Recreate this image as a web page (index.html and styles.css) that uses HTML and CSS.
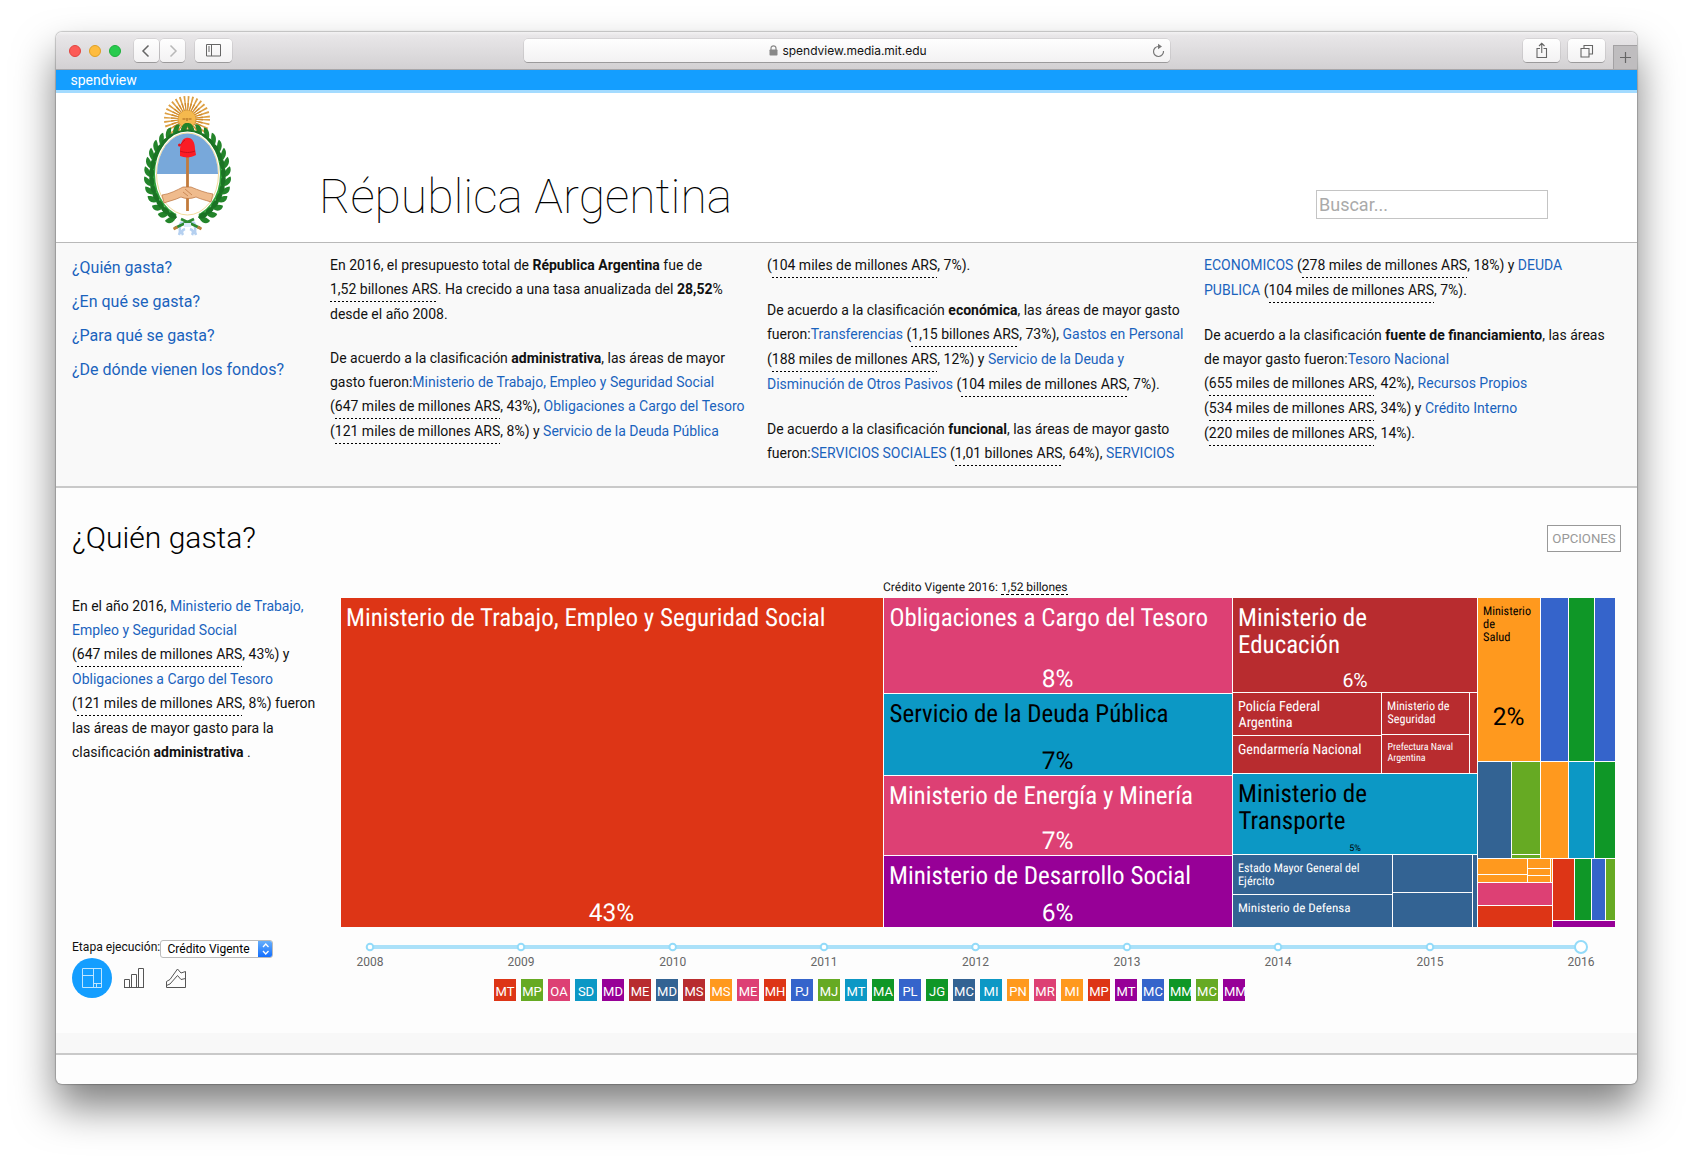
FILE: index.html
```
<!DOCTYPE html>
<html lang="es">
<head>
<meta charset="utf-8">
<title>spendview</title>
<link rel="stylesheet" href="styles.css">
</head>
<body>
<div class="window">
  <div class="toolbar">
    <div class="lights"><i class="light red"></i><i class="light amber"></i><i class="light green"></i></div>
    <div class="btn nav-btn"><svg width="10" height="14" viewBox="0 0 10 14"><path d="M7.500 1.500 2 7l5.500 5.500" fill="none" stroke="#666" stroke-width="1.500"/></svg></div>
    <div class="btn nav-btn fwd"><svg width="10" height="14" viewBox="0 0 10 14"><path d="M2.500 1.500 8 7l-5.500 5.500" fill="none" stroke="#b8b8b8" stroke-width="1.500"/></svg></div>
    <div class="btn side-btn"><svg width="16" height="13" viewBox="0 0 16 13"><path d="M.5.5h14v11.500H.5zM5.500.5v11.500M2 3h2M2 5h2M2 7h2" fill="none" stroke="#666"/></svg></div>
    <div class="btn url">
      <svg class="lock" width="9" height="11" viewBox="0 0 9 11"><path d="M2 5V3.300a2.500 2.500 0 0 1 5 0V5" fill="none" stroke="#888" stroke-width="1.200"/><rect x=".5" y="4.500" width="8" height="6" rx=".8" fill="#888"/></svg>
      <span class="address">spendview.media.mit.edu</span>
      <svg class="reload" width="13" height="15" viewBox="0 0 13 15"><path d="M6.500 3.500A5 5 0 1 0 11.500 8" fill="none" stroke="#777" stroke-width="1.200"/><path d="M6 .8 10 3.600 6 6.200z" fill="#777"/></svg>
    </div>
    <div class="btn share-btn"><svg width="12" height="17" viewBox="0 0 12 17"><path d="M4 6.500H1v9h9.500v-9h-3M5.750 11V1.500M3 4l2.750-2.750L8.500 4" fill="none" stroke="#666" stroke-width="1.100"/></svg></div>
    <div class="btn tabs-btn"><svg width="14" height="14" viewBox="0 0 14 14"><path d="M1 4.500h8v8.500H1zM4 4.500V1.500h8.500V10H9" fill="none" stroke="#666" stroke-width="1.100"/></svg></div>
    <div class="plus"><svg width="11" height="11" viewBox="0 0 11 11"><path d="M5.500 0v11M0 5.500h11" stroke="#666" stroke-width="1.200"/></svg></div>
  </div>

  <div class="brand"><span>spendview</span></div>

  <header class="head">
    <svg class="arms" width="120" height="147" viewBox="0 5 120 147">
      <defs>
        <g id="sprig">
          <path d="M-37.500 1C-45-1-46-6-44-9c4 2 7 6 6.500 10z" fill="#23842a"/>
          <path d="M-37.500 1C-31 0-30-5-32-8.500c-4 1.500-6.500 5.500-5.500 9.500z" fill="#33a13a"/>
          <path d="M-37 2c-3.500-4-3.500-8-.5-11.500C-34-6-34-2-37 2z" fill="#1b7324"/>
        </g>
        <g id="branch">
          <use href="#sprig" transform="rotate(-70)"/><use href="#sprig" transform="rotate(-58)"/><use href="#sprig" transform="rotate(-46)"/>
          <use href="#sprig" transform="rotate(-34)"/><use href="#sprig" transform="rotate(-23)"/><use href="#sprig" transform="rotate(-12)"/>
          <use href="#sprig" transform="rotate(-1)"/><use href="#sprig" transform="rotate(10)"/><use href="#sprig" transform="rotate(21)"/>
          <use href="#sprig" transform="rotate(32)"/><use href="#sprig" transform="rotate(44)"/><use href="#sprig" transform="rotate(56)"/>
          <use href="#sprig" transform="rotate(68)"/><use href="#sprig" transform="rotate(80)"/>
        </g>
      </defs>
      <circle cx="57" cy="31" r="15.500" fill="none" stroke="#dd9f42" stroke-width="15" stroke-dasharray="1.300 1.745"/>
      <circle cx="57" cy="31" r="12" fill="none" stroke="#d18b2c" stroke-width="8" stroke-dasharray="1.200 1.156"/>
      <circle cx="57" cy="31" r="9" fill="#f5b94e" stroke="#cf8c2c" stroke-width=".6"/>
      <path d="M52.500 31h3M58.500 31h3M55 35.500h4M57 30v3" stroke="#a8671d" stroke-width="1.100"/>
      <g transform="translate(57.500 88) scale(.96 1.170)">
        <path d="M-12 36A38 38 0 0 1-16-34.500M12 36A38 38 0 0 0 16-34.500" fill="none" stroke="#2b8c32" stroke-width="1.500"/>
        <use href="#branch"/><use href="#branch" transform="scale(-1 1)"/>
      </g>
      <path d="M52 134c-5 4 0 7-3 13M63 134c5 4 0 7 3 13M51 136c4-3 9-3 13 0M55 141c-3 1-4 3-2 6M60 141c3 1 4 3 2 6" fill="none" stroke="#b5d0f0" stroke-width="2.600"/>
      <path d="M45 140l19-9M70 140l-19-9" stroke="#2d8a31" stroke-width="2.600"/>
      <path d="M43.500 141l4-2M71.500 141l-4-2" stroke="#b9813c" stroke-width="3"/>
      <path d="M54 135h7v4h-7z" fill="#dceafa"/>
      <ellipse cx="57.500" cy="86" rx="31.500" ry="41.500" fill="#fff" stroke="#fff" stroke-width="2"/>
      <ellipse cx="57.500" cy="86" rx="31" ry="41" fill="#fff" stroke="#f2dc9b"/>
      <path d="M27 86a30.500 40.500 0 0 1 61 0z" fill="#78a8da"/>
      <path d="M57.500 66v57" stroke="#c27b3b" stroke-width="2.800"/>
      <path d="M32 107c8-1 15-5 21-8l8 0c7 3 15 6 22 7l-2 8c-6-2-11-3-15-5-5 2-11 2-15 0-6 3-12 4-17 6z" fill="#efbb8d" stroke="#b9713d" stroke-width=".7"/>
      <path d="M55 101l7 6M53 104l5 4" stroke="#b9713d" stroke-width=".7"/>
      <path d="M50 68V61c1-6 2-10 6-11 6-1 9 4 9 11l1 6c-5 3-11 3-16 1z" fill="#fb1c25"/>
      <path d="M50 63c5 2 10 2 15 0M55 52c-3 2-4 5-6 6" stroke="#c8101b" fill="none"/>
      <circle cx="49.500" cy="57" r="1.500" fill="#e5131f"/>
    </svg>
    <h1>Républica Argentina</h1>
    <input class="search" placeholder="Buscar...">
  </header>

  <section class="intro">
    <nav class="links">
      <a>¿Quién gasta?</a><a>¿En qué se gasta?</a><a>¿Para qué se gasta?</a><a>¿De dónde vienen los fondos?</a>
    </nav>
    <div class="cols">
      <div class="col">
        <p>En 2016, el presupuesto total de <b>Républica Argentina</b> fue de<br><u>1,52 billones ARS</u>. Ha crecido a una tasa anualizada del <b>28,52</b>%<br>desde el año 2008.</p>
        <p>De acuerdo a la clasificación <b>administrativa</b>, las áreas de mayor<br>gasto fueron:<a>Ministerio de Trabajo, Empleo y Seguridad Social</a><br>(<u>647 miles de millones ARS</u>, 43%), <a>Obligaciones a Cargo del Tesoro</a><br>(<u>121 miles de millones ARS</u>, 8%) y <a>Servicio de la Deuda Pública</a></p>
      </div>
      <div class="col">
        <p>(<u>104 miles de millones ARS</u>, 7%).</p>
        <p>De acuerdo a la clasificación <b>económica</b>, las áreas de mayor gasto<br>fueron:<a>Transferencias</a> (<u>1,15 billones ARS</u>, 73%), <a>Gastos en Personal</a><br>(<u>188 miles de millones ARS</u>, 12%) y <a>Servicio de la Deuda y<br>Disminución de Otros Pasivos</a> (<u>104 miles de millones ARS</u>, 7%).</p>
        <p>De acuerdo a la clasificación <b>funcional</b>, las áreas de mayor gasto<br>fueron:<a>SERVICIOS SOCIALES</a> (<u>1,01 billones ARS</u>, 64%), <a>SERVICIOS</a></p>
      </div>
      <div class="col">
        <p><a>ECONOMICOS</a> (<u>278 miles de millones ARS</u>, 18%) y <a>DEUDA<br>PUBLICA</a> (<u>104 miles de millones ARS</u>, 7%).</p>
        <p>De acuerdo a la clasificación <b>fuente de financiamiento</b>, las áreas<br>de mayor gasto fueron:<a>Tesoro Nacional</a><br>(<u>655 miles de millones ARS</u>, 42%), <a>Recursos Propios</a><br>(<u>534 miles de millones ARS</u>, 34%) y <a>Crédito Interno</a><br>(<u>220 miles de millones ARS</u>, 14%).</p>
      </div>
    </div>
  </section>

  <section class="spend">
    <div class="spend-head"><h2>¿Quién gasta?</h2><button class="options">OPCIONES</button></div>
    <div class="spend-body">
      <aside class="side">
        <p>En el año 2016, <a>Ministerio de Trabajo,<br>Empleo y Seguridad Social</a><br>(<u>647 miles de millones ARS</u>, 43%) y<br><a>Obligaciones a Cargo del Tesoro</a><br>(<u>121 miles de millones ARS</u>, 8%) fueron<br>las áreas de mayor gasto para la<br>clasificación <b>administrativa</b> .</p>
        <div class="controls">
          <div class="stage"><label>Etapa ejecución:</label><span class="select"><span>Crédito Vigente</span><i><svg width="15" height="18" viewBox="0 0 15 18"><path d="M5 7l2.750-3L10.500 7M5 11l2.750 3 2.750-3" fill="none" stroke="#fff" stroke-width="1.300"/></svg></i></span></div>
          <div class="modes">
            <span class="mode on"><svg width="20" height="20" viewBox="0 0 20 20"><path d="M.5.5h19v19H.5zM11.500.5v19M.5 7.500h11M11.500 15.500h8M14.500 15.500v4" fill="none" stroke="#bfe6ff"/></svg></span>
            <span class="mode"><svg width="20" height="20" viewBox="0 0 20 20"><path d="M.5 11.500h5v8h-5zM7.500 6.500h5v13h-5zM14.500.5h5v19h-5zM0 19.500h20" fill="none" stroke="#555"/></svg></span>
            <span class="mode"><svg width="20" height="20" viewBox="0 0 20 20"><path d="M.5 19.500V13.500L4 11.500 11.500 1l3.500 4 4.500-1.500v16zM.5 17.500 4 16l7.500-8.500 3.500 4 4.500-1" fill="none" stroke="#555"/></svg></span>
          </div>
        </div>
      </aside>
      <div class="chart">
        <svg class="treemap" width="1274" height="353" viewBox="341 575 1274 353">
          <g class="total"><text x="883" y="591" textLength="115">Crédito Vigente 2016:</text><text x="1001" y="591" textLength="66.500">1,52 billones</text><path d="M1001 594.500h67" stroke="#000" stroke-dasharray="3 2"/></g>
          <g class="c-red"><rect x="341" y="598" width="542" height="329"/><rect x="1478" y="906" width="74" height="21"/><rect x="1553" y="859" width="21" height="61"/></g>
          <g class="c-pink"><rect x="884" y="598" width="348" height="95"/><rect x="884" y="776" width="348" height="79"/><rect x="1478" y="883" width="74" height="22"/></g>
          <g class="c-teal"><rect x="884" y="694" width="348" height="81"/><rect x="1233" y="774" width="244" height="80"/><rect x="1569" y="762" width="25" height="96"/></g>
          <g class="c-purple"><rect x="884" y="856" width="348" height="71"/><rect x="1553" y="921" width="62" height="6"/></g>
          <g class="c-brick"><rect x="1233" y="598" width="244" height="94"/><rect x="1233" y="693" width="148" height="42"/><rect x="1233" y="736" width="148" height="37"/><rect x="1382" y="693" width="87" height="41"/><rect x="1382" y="735" width="87" height="38"/><rect x="1470" y="693" width="7" height="80"/></g>
          <g class="c-steel"><rect x="1233" y="855" width="159" height="39"/><rect x="1233" y="895" width="159" height="32"/><rect x="1393" y="855" width="79" height="37"/><rect x="1393" y="893" width="79" height="34"/><rect x="1473" y="855" width="4" height="72"/><rect x="1478" y="762" width="33" height="96"/></g>
          <g class="c-orange"><rect x="1478" y="598" width="62" height="163"/><rect x="1541" y="762" width="27" height="96"/><rect x="1478" y="859" width="49" height="15"/><rect x="1478" y="875" width="49" height="7"/><rect x="1528" y="859" width="22" height="9"/><rect x="1528" y="869" width="22" height="6"/><rect x="1528" y="876" width="22" height="6"/><rect x="1551" y="859" width="1" height="23"/></g>
          <g class="c-blue"><rect x="1541" y="598" width="27" height="163"/><rect x="1595" y="598" width="20" height="163"/><rect x="1592" y="859" width="13" height="61"/></g>
          <g class="c-green"><rect x="1569" y="598" width="25" height="163"/><rect x="1595" y="762" width="20" height="96"/><rect x="1575" y="859" width="16" height="61"/></g>
          <g class="c-lime"><rect x="1512" y="762" width="28" height="92"/><rect x="1512" y="855" width="28" height="3"/><rect x="1606" y="859" width="9" height="61"/></g>
          <g class="name big">
            <text x="346" y="626" textLength="479.500" lengthAdjust="spacingAndGlyphs">Ministerio de Trabajo, Empleo y Seguridad Social</text>
            <text x="889.500" y="626" textLength="318.500" lengthAdjust="spacingAndGlyphs">Obligaciones a Cargo del Tesoro</text>
            <text class="ink" x="889.500" y="722" textLength="279" lengthAdjust="spacingAndGlyphs">Servicio de la Deuda Pública</text>
            <text x="889" y="804" textLength="304" lengthAdjust="spacingAndGlyphs">Ministerio de Energía y Minería</text>
            <text x="889" y="884" textLength="302" lengthAdjust="spacingAndGlyphs">Ministerio de Desarrollo Social</text>
            <text x="1238" y="626" textLength="129" lengthAdjust="spacingAndGlyphs">Ministerio de</text>
            <text x="1238" y="653" textLength="102" lengthAdjust="spacingAndGlyphs">Educación</text>
            <text class="ink" x="1238" y="802" textLength="129" lengthAdjust="spacingAndGlyphs">Ministerio de</text>
            <text class="ink" x="1238.500" y="829" textLength="107" lengthAdjust="spacingAndGlyphs">Transporte</text>
          </g>
          <g class="name s14">
            <text x="1238" y="711" textLength="82" lengthAdjust="spacingAndGlyphs">Policía Federal</text>
            <text x="1238.500" y="727" textLength="54" lengthAdjust="spacingAndGlyphs">Argentina</text>
            <text x="1238" y="754" textLength="123.500" lengthAdjust="spacingAndGlyphs">Gendarmería Nacional</text>
          </g>
          <g class="name s12">
            <text x="1387" y="710" textLength="62.500" lengthAdjust="spacingAndGlyphs">Ministerio de</text>
            <text x="1387.500" y="723" textLength="48" lengthAdjust="spacingAndGlyphs">Seguridad</text>
            <text x="1238" y="872" textLength="121.500" lengthAdjust="spacingAndGlyphs">Estado Mayor General del</text>
            <text x="1238" y="885" textLength="36.500" lengthAdjust="spacingAndGlyphs">Ejército</text>
            <text x="1238" y="912" textLength="112.500" lengthAdjust="spacingAndGlyphs">Ministerio de Defensa</text>
            <text class="ink" x="1483" y="615" textLength="48" lengthAdjust="spacingAndGlyphs">Ministerio</text>
            <text class="ink" x="1483" y="628" textLength="12" lengthAdjust="spacingAndGlyphs">de</text>
            <text class="ink" x="1483" y="641" textLength="27.500" lengthAdjust="spacingAndGlyphs">Salud</text>
          </g>
          <g class="name s10">
            <text x="1387.500" y="750" textLength="65.500" lengthAdjust="spacingAndGlyphs">Prefectura Naval</text>
            <text x="1387.500" y="761" textLength="38" lengthAdjust="spacingAndGlyphs">Argentina</text>
          </g>
          <g class="share">
            <text x="611.500" y="921">43%</text><text x="1057.500" y="687">8%</text><text class="ink" x="1057.500" y="769">7%</text><text x="1057.500" y="849">7%</text><text x="1057.500" y="921">6%</text>
            <text class="mid" x="1355" y="687">6%</text><text class="ink tiny" x="1355" y="851">5%</text><text class="ink" x="1508.500" y="725">2%</text>
          </g>
        </svg>
        <svg class="timeline" width="1274" height="46" viewBox="341 928 1274 46">
          <path d="M370 947h1211" stroke="#abe1f9" stroke-width="4"/>
          <g fill="#fff" stroke="#93dbf9" stroke-width="2"><circle cx="370" cy="947" r="3.300"/><circle cx="521" cy="947" r="3.300"/><circle cx="672.700" cy="947" r="3.300"/><circle cx="824" cy="947" r="3.300"/><circle cx="975.500" cy="947" r="3.300"/><circle cx="1127" cy="947" r="3.300"/><circle cx="1278" cy="947" r="3.300"/><circle cx="1430" cy="947" r="3.300"/><circle cx="1581" cy="947" r="6"/></g>
          <g class="years"><text x="370" y="966">2008</text><text x="521" y="966">2009</text><text x="672.700" y="966">2010</text><text x="824" y="966">2011</text><text x="975.500" y="966">2012</text><text x="1127" y="966">2013</text><text x="1278" y="966">2014</text><text x="1430" y="966">2015</text><text x="1581" y="966">2016</text></g>
        </svg>
        <div class="legend">
          <span class="c-red">MT</span><span class="c-lime">MP</span><span class="c-pink">OA</span><span class="c-teal">SD</span><span class="c-purple">MD</span><span class="c-brick">ME</span><span class="c-steel">MD</span><span class="c-brick">MS</span><span class="c-orange">MS</span><span class="c-pink">ME</span><span class="c-red">MH</span><span class="c-blue">PJ</span><span class="c-lime">MJ</span><span class="c-teal">MT</span><span class="c-green">MA</span><span class="c-blue">PL</span><span class="c-green">JG</span><span class="c-steel">MC</span><span class="c-teal">MI</span><span class="c-orange">PN</span><span class="c-pink">MR</span><span class="c-orange">MI</span><span class="c-red">MP</span><span class="c-purple">MT</span><span class="c-blue">MC</span><span class="c-green wide">MM</span><span class="c-lime">MC</span><span class="c-purple wide">MM</span>
        </div>
      </div>
    </div>
  </section>
  <div class="strip"></div>
</div>
</body>
</html>
```
FILE: styles.css
```
* { box-sizing: border-box; }
html, body { margin: 0; height: 1164px; overflow: hidden; background: #fff; }
body { font-family: Roboto, "Liberation Sans", sans-serif; color: #111; display: flow-root; }
a { color: #1a63bd; }
h1, h2, p { margin: 0; font-weight: 400; }

.window {
  width: 1581px; height: 1052px; margin: 32px 0 0 56px;
  border-radius: 6px; overflow: hidden; background: #fdfdfd;
  box-shadow: 0 0 1px 1px rgba(0,0,0,.2), 0 23px 40px rgba(0,0,0,.5);
}

/* browser toolbar */
.toolbar {
  height: 38px; display: flex; align-items: center; padding: 0 0 0 13px;
  background: linear-gradient(#f3f2f3, #e8e6e8 10%, #d3d1d3); border-bottom: 1px solid #a8a6a8;
}
.lights { display: flex; gap: 8px; margin-right: 12px; }
.light { width: 12px; height: 12px; border-radius: 50%; border: 1px solid; }
.light.red { background: #fc5b57; border-color: #e2443f; }
.light.amber { background: #febc3f; border-color: #dfa023; }
.light.green { background: #28cb4e; border-color: #1db03c; }
.btn {
  height: 23px; border-radius: 4px; background: linear-gradient(#fefefe, #f3f2f3);
  box-shadow: 0 0 0 .5px rgba(0,0,0,.14), 0 1px 0 rgba(0,0,0,.22);
  display: flex; align-items: center; justify-content: center; flex: none;
}
.nav-btn { width: 25px; }
.lights + .nav-btn { margin-left: .5px; }
.fwd { margin-left: 1.500px; }
.side-btn { width: 37px; margin-left: 10px; }
.url { width: 646px; margin-left: 292px; padding-right: 5px; font: 12px Inter, sans-serif; color: #111; }
.lock { margin-left: auto; margin-right: 4px; }
.reload { margin-left: auto; }
.url::before { content: ""; width: 20px; }
.share-btn { width: 37px; margin-left: auto; }
.tabs-btn { width: 37px; margin-left: 8px; }
.plus {
  width: 24px; height: 24px; margin-left: 8px; align-self: flex-end;
  display: flex; align-items: center; justify-content: center;
  background: #bfbdbf; border: solid #a3a1a3; border-width: 1px 0 0 1px;
}

.brand {
  height: 23px; background: #149eff; border-bottom: 3px solid #a3dbff;
  padding-left: 14.500px; font-size: 14px; line-height: 20px; color: #fff;
}

.head {
  height: 150px; background: #fff; border-bottom: 1px solid #b9b9b9;
  display: flex; align-items: flex-start;
}
.arms { margin-left: 74px; flex: none; }
h1 { margin: 76px 0 0 69px; font-size: 48px; line-height: 56px; font-weight: 100; color: #000; white-space: nowrap; }
.search {
  width: 232px; height: 29px; margin: 97px 89px 0 auto; padding: 0 2px;
  border: 1px solid #c4c4c4; background: #fff; font: 18px Roboto, sans-serif;
}
.search::placeholder { color: #aaa; }

/* summary */
.intro { height: 245px; display: flex; background: #f9f9f9; border-bottom: 2px solid #c9c9c9; padding: 10px 0 0 16px; }
.links { width: 258px; flex: none; display: flex; flex-direction: column; font-size: 16px; white-space: nowrap; }
.links a { height: 34px; line-height: 30px; }
.cols { display: flex; }
.col { width: 437px; flex: none; }
.col p, .side p { font-size: 14px; line-height: 24px; white-space: nowrap; }
.col p + p { margin-top: 20px; }
u {
  display: inline-block; text-decoration: none; padding-bottom: 1px;
  background: repeating-linear-gradient(90deg, #000 0 2px, transparent 2px 4px) left bottom / 100% 1px no-repeat;
}
b { font-weight: 700; }

.spend { height: 545px; padding: 32px 16px 0; }
.spend-head { display: flex; justify-content: space-between; height: 55px; }
h2 { font-size: 30px; line-height: 36px; font-weight: 300; color: #000; }
.options {
  width: 74px; height: 27px; margin-top: 5px; padding: 0; border: 1px solid #999;
  background: #fff; color: #999; font: 13.200px Roboto, sans-serif;
}
.spend-body { display: flex; }
.side { width: 269px; height: 440px; display: flex; flex-direction: column; justify-content: space-between; padding-top: 19px; }
.controls { height: 75px; }
.stage { height: 18px; display: flex; font-size: 12.100px; }
.stage label { line-height: 15px; width: 88px; white-space: nowrap; color: #111; }
.select {
  width: 113px; height: 18px; border-radius: 3px; background: #fff; overflow: hidden;
  display: flex; justify-content: space-between; border: 1px solid #bbb; padding-left: 6.500px;
  font-size: 12px; line-height: 17px; color: #000; white-space: nowrap;
}
.select i { width: 15px; margin: -1px; background: linear-gradient(#6cb3fa, #0f6bff); }
.select svg { display: block; }
.modes { display: flex; gap: 2px; }
.mode { width: 40px; height: 40px; border-radius: 50%; display: flex; align-items: center; justify-content: center; }
.mode.on { background: #149eff; }

/* chart */
.chart { width: 1274px; display: flex; flex-direction: column; }
.treemap, .timeline { display: block; }
.treemap { text-rendering: geometricPrecision; }
.c-red { fill: #dd3516; background: #dd3516; }
.c-lime { fill: #66aa23; background: #66aa23; }
.c-pink { fill: #dd4074; background: #dd4074; }
.c-teal { fill: #0c98c5; background: #0c98c5; }
.c-purple { fill: #970097; background: #970097; }
.c-brick { fill: #b82c2f; background: #b82c2f; }
.c-steel { fill: #336393; background: #336393; }
.c-orange { fill: #ff991e; background: #ff991e; }
.c-blue { fill: #3564cb; background: #3564cb; }
.c-green { fill: #0f9727; background: #0f9727; }
.total { font-size: 12px; fill: #111; }
.name { font-family: "Roboto Condensed", Roboto, sans-serif; font-stretch: 75%; fill: #fff; }
.name.big { font-size: 25px; }
.s14 { font-size: 14px; }
.s12 { font-size: 12px; }
.s10 { font-size: 10px; }
.share { font-size: 24.500px; fill: #fff; text-anchor: middle; }
.share .mid { font-size: 19.500px; }
.share .tiny { font-size: 9px; }
svg .ink { fill: #000; }
.years { font-size: 12px; fill: #666; text-anchor: middle; }
.legend { display: flex; gap: 5px; margin: 5px 0 0 153px; }
.legend span { width: 22px; height: 22px; overflow: hidden; color: #fff; font-size: 13px; line-height: 25px; text-align: center; }
.legend .wide { text-align: left; padding-left: 1px; }

.strip { height: 22px; background: #f8f8f8; border-bottom: 2px solid #c9c9c9; }
```
